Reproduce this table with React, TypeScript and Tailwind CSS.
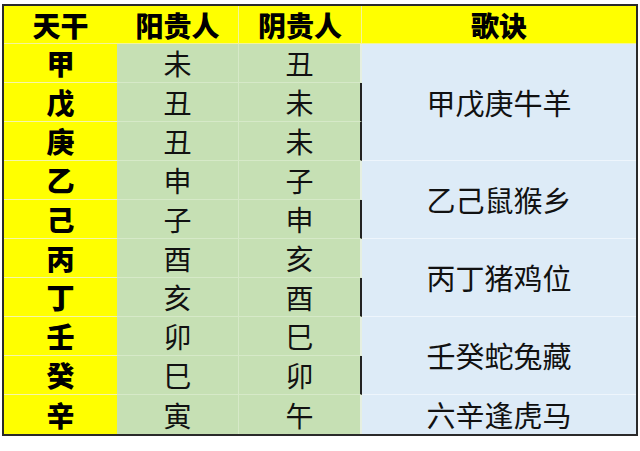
import React from "react";

const rows: [string, string, string][] = [
  ["甲", "未", "丑"],
  ["戊", "丑", "未"],
  ["庚", "丑", "未"],
  ["乙", "申", "子"],
  ["己", "子", "申"],
  ["丙", "酉", "亥"],
  ["丁", "亥", "酉"],
  ["壬", "卯", "巳"],
  ["癸", "巳", "卯"],
  ["辛", "寅", "午"],
];

const verses: { text: string; cls: string }[] = [
  { text: "甲戊庚牛羊", cls: "row-start-2 row-span-3" },
  { text: "乙己鼠猴乡", cls: "row-start-5 row-span-2" },
  { text: "丙丁猪鸡位", cls: "row-start-7 row-span-2" },
  { text: "壬癸蛇兔藏", cls: "row-start-9 row-span-2" },
  { text: "六辛逢虎马", cls: "row-start-11 row-span-1" },
];

const darkRight = new Set([1, 2, 4, 6, 8]);

const rowStart = [
  "row-start-2",
  "row-start-3",
  "row-start-4",
  "row-start-5",
  "row-start-6",
  "row-start-7",
  "row-start-8",
  "row-start-9",
  "row-start-10",
  "row-start-11",
];

export default function App() {
  return (
    <div
      className="w-[640px] h-[451px] bg-white pt-[4px] pl-[2px]"
      style={{ fontFamily: '"Noto Sans CJK SC", "Noto Sans", sans-serif' }}
    >
      <div className="w-[636px] h-[432px] border-2 border-[#2a2a2a]">
        <div className="grid grid-cols-[113px_122px_123px_274px] grid-rows-[38px_repeat(10,39px)] text-[28px] leading-none text-[#111]">
          <div className="col-start-1 row-start-1 bg-[#ffff00] border-b border-[#f4f49a] flex items-center justify-center font-black text-black">
            天干
          </div>
          <div className="col-start-2 row-start-1 bg-[#ffff00] border-b border-r border-[#f4f49a] flex items-center justify-center font-black text-black">
            阳贵人
          </div>
          <div className="col-start-3 row-start-1 bg-[#ffff00] border-b border-r border-[#f4f49a] flex items-center justify-center font-black text-black">
            阴贵人
          </div>
          <div className="col-start-4 row-start-1 bg-[#ffff00] border-b border-[#f4f49a] flex items-center justify-center font-black text-black">
            歌诀
          </div>
          {rows.map((r, i) => (
            <React.Fragment key={i}>
              <div
                className={`col-start-1 ${rowStart[i]} bg-[#ffff00] ${i < 9 ? "border-b border-[#f6f6a8]" : ""} flex items-center justify-center font-black text-black`}
              >
                {r[0]}
              </div>
              <div
                className={`col-start-2 ${rowStart[i]} bg-[#c6e0b4] ${i < 9 ? "border-b" : ""} border-r border-[#d6e9c8] flex items-center justify-center`}
              >
                {r[1]}
              </div>
              <div
                className={`col-start-3 ${rowStart[i]} bg-[#c6e0b4] ${i < 9 ? "border-b border-b-[#d6e9c8]" : ""} ${darkRight.has(i) ? "border-r-2 border-r-[#222]" : "border-r-2 border-r-[#e6efe0]"} flex items-center justify-center`}
              >
                {r[2]}
              </div>
            </React.Fragment>
          ))}
          {verses.map((v, i) => (
            <div
              key={i}
              className={`col-start-4 ${v.cls} bg-[#ddebf7] ${i < 4 ? "border-b border-[#eef5fc]" : ""} flex items-center justify-center text-[29px]`}
            >
              {v.text}
            </div>
          ))}
        </div>
      </div>
    </div>
  );
}
